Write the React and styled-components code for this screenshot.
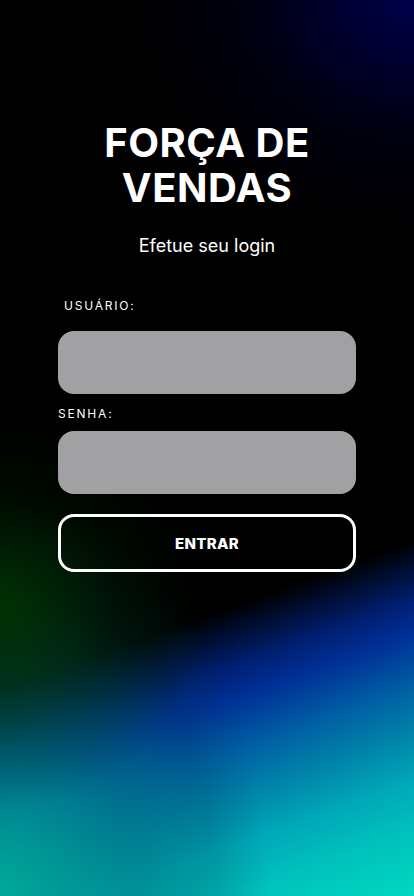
import React from 'react';
import styled, { createGlobalStyle } from 'styled-components';

const GlobalStyle = createGlobalStyle`
  html, body {
    margin: 0;
    padding: 0;
    background: #000;
  }
  * {
    box-sizing: border-box;
  }
`;

const Screen = styled.div`
  width: 414px;
  min-height: 896px;
  display: flex;
  flex-direction: column;
  align-items: center;
  padding: 120px 58px 0;
  font-family: Inter, "Open Sans", sans-serif;
  color: #fff;
  background-color: #000;
  background-image:
    radial-gradient(ellipse 70% 26% at 100% 0%, rgba(0, 0, 80, 0.95), rgba(0, 0, 40, 0.35) 60%, transparent),
    radial-gradient(ellipse 50% 22% at 0% 68%, rgba(0, 52, 0, 0.9), rgba(0, 30, 0, 0.35) 55%, transparent),
    radial-gradient(ellipse 65% 44% at 0% 100%, rgba(0, 172, 150, 0.9), rgba(0, 120, 125, 0.55) 50%, rgba(0, 70, 80, 0.2) 80%, transparent),
    linear-gradient(160deg, transparent 0%, transparent 66%, rgba(0, 36, 130, 0.9) 72%, #003096 75%, #0060a4 80%, #0080a8 84%, #00a8b8 89%, #00c2bc 94%, #00d8c0 100%);
`;

const Title = styled.h1`
  margin: 0;
  font-size: 40px;
  line-height: 45px;
  font-weight: 700;
  text-align: center;
  letter-spacing: 0.5px;
`;

const Subtitle = styled.p`
  margin: 25px 0 0;
  font-size: 18px;
  font-weight: 400;
  text-align: center;
`;

const Form = styled.form`
  width: 100%;
  display: flex;
  flex-direction: column;
  margin-top: 42px;
`;

const Label = styled.label`
  font-size: 12px;
  letter-spacing: 1.8px;
  padding-left: ${p => p.$indent || 0}px;
  margin-bottom: ${p => p.$gap || 18}px;
`;

const Input = styled.input`
  width: 100%;
  height: 63px;
  border: none;
  border-radius: 16px;
  background: #a1a1a3;
  padding: 0 18px;
  font-size: 16px;
  outline: none;
  margin-bottom: 12px;
`;

const Button = styled.button`
  margin-top: 8px;
  height: 58px;
  width: 100%;
  border: 3px solid #fff;
  border-radius: 16px;
  background: transparent;
  color: #fff;
  font-family: Inter, sans-serif;
  font-size: 15px;
  font-weight: 800;
  letter-spacing: 0.3px;
`;

export default function App() {
  return (
    <>
      <GlobalStyle />
      <Screen>
        <Title>FORÇA DE<br />VENDAS</Title>
        <Subtitle>Efetue seu login</Subtitle>
        <Form onSubmit={e => e.preventDefault()}>
          <Label $indent={6}>USUÁRIO:</Label>
          <Input type="text" />
          <Label $gap={10}>SENHA:</Label>
          <Input type="password" />
          <Button type="submit">ENTRAR</Button>
        </Form>
      </Screen>
    </>
  );
}
